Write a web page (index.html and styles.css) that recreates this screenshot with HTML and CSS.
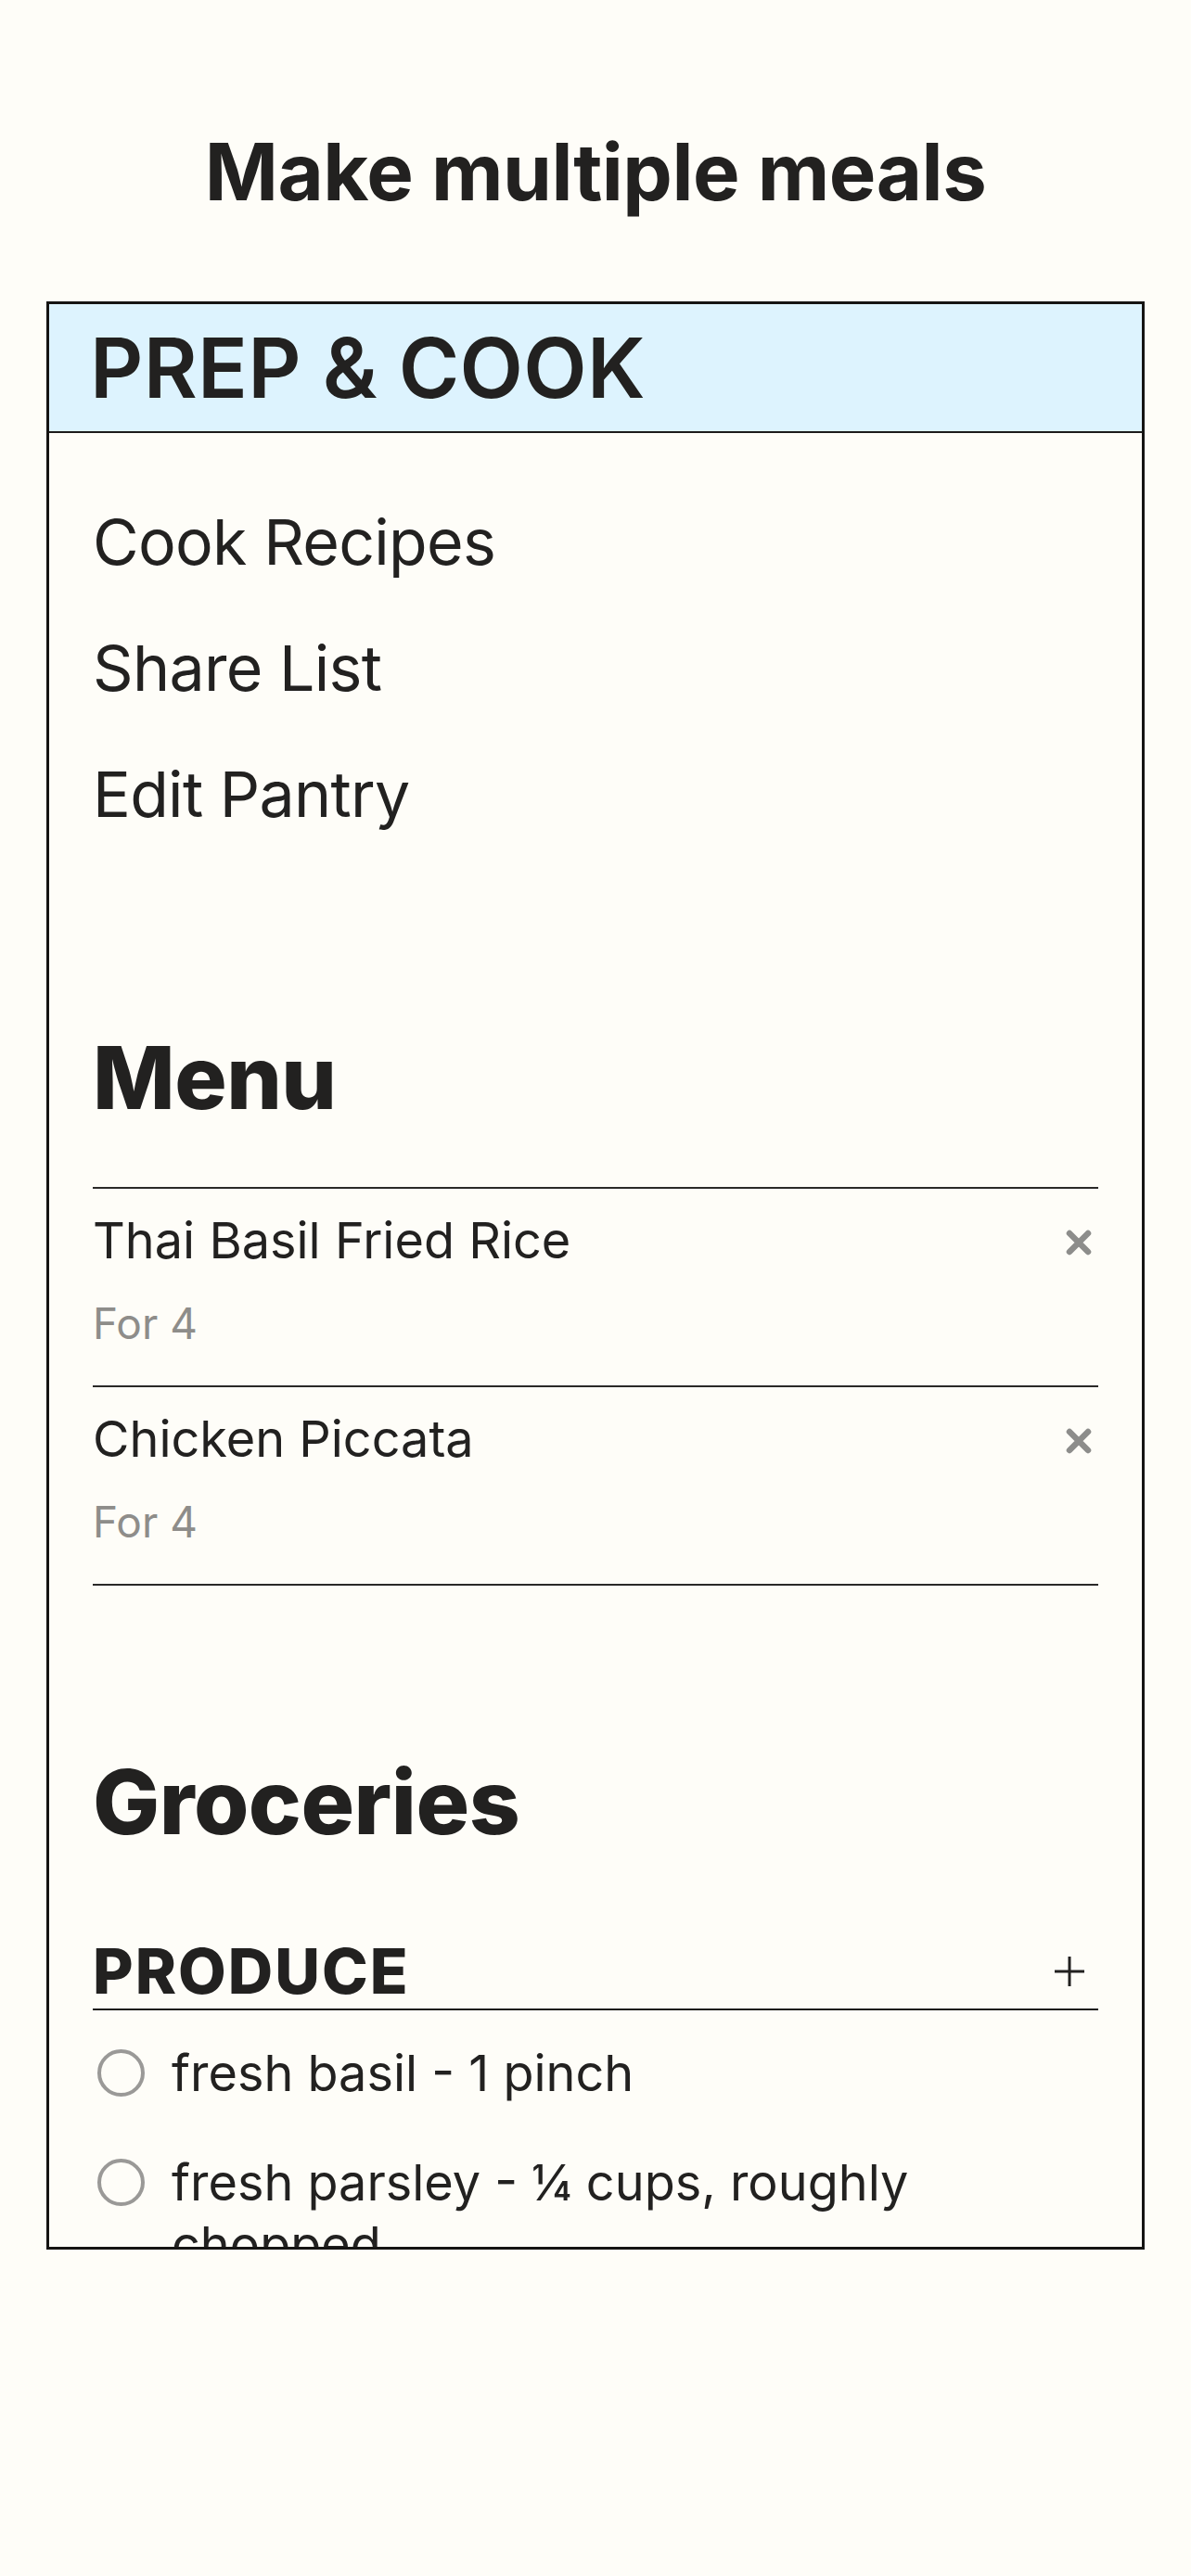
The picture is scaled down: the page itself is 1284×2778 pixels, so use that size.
FILE: index.html
```html
<!DOCTYPE html>
<html lang="en">
<head>
<meta charset="utf-8">
<title>Make multiple meals</title>
<link rel="stylesheet" href="styles.css">
</head>
<body>
<h1 class="page-title">Make multiple meals</h1>
<div class="phone">
  <header class="app-header">PREP &amp; COOK</header>
  <div class="app-body">
    <nav class="actions">
      <a class="action">Cook Recipes</a>
      <a class="action">Share List</a>
      <a class="action">Edit Pantry</a>
    </nav>

    <h2 class="section-title menu-title">Menu</h2>
    <ul class="menu-list">
      <li class="menu-item">
        <div class="menu-row">
          <span class="menu-name">Thai Basil Fried Rice</span>
          <span class="remove"><svg viewBox="0 0 30 30" width="30" height="30"><path d="M5 5 L25 25 M25 5 L5 25" stroke="#8d8d8b" stroke-width="6.5" stroke-linecap="round" fill="none"/></svg></span>
        </div>
        <div class="menu-serves">For 4</div>
      </li>
      <li class="menu-item">
        <div class="menu-row">
          <span class="menu-name">Chicken Piccata</span>
          <span class="remove"><svg viewBox="0 0 30 30" width="30" height="30"><path d="M5 5 L25 25 M25 5 L5 25" stroke="#8d8d8b" stroke-width="6.5" stroke-linecap="round" fill="none"/></svg></span>
        </div>
        <div class="menu-serves">For 4</div>
      </li>
    </ul>

    <h2 class="section-title groceries-title">Groceries</h2>
    <div class="aisle">
      <div class="aisle-head">
        <span class="aisle-name">PRODUCE</span>
        <span class="add"><svg viewBox="0 0 36 36" width="36" height="36"><path d="M18 2 V34 M2 18 H34" stroke="#222120" stroke-width="3" fill="none"/></svg></span>
      </div>
      <ul class="grocery-list">
        <li class="grocery-item"><span class="check"></span><span class="grocery-text">fresh basil - 1 pinch</span></li>
        <li class="grocery-item"><span class="check"></span><span class="grocery-text">fresh parsley - ¼ cups, roughly chopped</span></li>
        <li class="grocery-item"><span class="check"></span><span class="grocery-text">lemon - 1</span></li>
      </ul>
    </div>
  </div>
</div>
</body>
</html>
```
FILE: styles.css
```css
* { box-sizing: border-box; }
html, body { margin: 0; padding: 0; }
body {
  background: #fefdf8;
  color: #222120;
  font-family: Inter, "Noto Sans", "Liberation Sans", sans-serif;
}
.page-title {
  margin: 0;
  padding-top: 135px;
  font-size: 85px;
  line-height: 102px;
  font-weight: 700;
  text-align: center;
  letter-spacing: -0.5px;
}
.phone {
  width: 1184px;
  height: 2101px;
  margin: 88px auto 0;
  border: 3px solid #151413;
  overflow: hidden;
  background: #fefdf8;
}
.app-header {
  height: 139px;
  background: #ddf3fe;
  border-bottom: 2px solid #1d1c1b;
  font-size: 89px;
  line-height: 137px;
  font-weight: 600;
  padding-left: 44px;
  letter-spacing: 0.3px;
}
.app-body {
  padding: 0 47px;
}
.actions {
  display: flex;
  flex-direction: column;
  padding-top: 49px;
}
.action {
  font-size: 68px;
  line-height: 136px;
  font-weight: 400;
  letter-spacing: -0.7px;
}
.section-title {
  margin: 0;
  font-size: 94px;
  line-height: 113px;
  font-weight: 800;
  letter-spacing: -0.5px;
}
.menu-title { margin-top: 182px; }
.menu-list {
  list-style: none;
  margin: 61px 0 0;
  padding: 0;
  border-bottom: 2px solid #2a2928;
}
.menu-item {
  border-top: 2px solid #2a2928;
  padding: 21px 0 37px;
}
.menu-row {
  display: flex;
  justify-content: space-between;
  align-items: center;
  min-height: 70px;
}
.menu-name {
  font-size: 54px;
  line-height: 70px;
}
.remove {
  display: flex;
  margin-right: 6px;
  margin-top: 4px;
}
.menu-serves {
  margin-top: 24px;
  font-size: 46px;
  line-height: 60px;
  color: #8e8d8a;
}
.groceries-title {
  margin-top: 176px;
  font-size: 96px;
  line-height: 115px;
}
.aisle { margin-top: 85px; }
.aisle-head {
  display: flex;
  justify-content: space-between;
  align-items: center;
  height: 82px;
  border-bottom: 2px solid #1d1c1b;
}
.aisle-name {
  font-size: 67px;
  line-height: 80px;
  font-weight: 800;
  letter-spacing: 2px;
}
.add {
  display: flex;
  margin-right: 13px;
}
.grocery-list {
  list-style: none;
  margin: 0;
  padding: 34px 0 0;
}
.grocery-item {
  display: flex;
  align-items: flex-start;
  margin-bottom: 51px;
}
.check {
  flex: none;
  width: 51px;
  height: 51px;
  margin: 8px 29px 0 5px;
  border: 4px solid #9a9997;
  border-radius: 50%;
}
.grocery-text {
  font-size: 54px;
  line-height: 67px;
}
```
